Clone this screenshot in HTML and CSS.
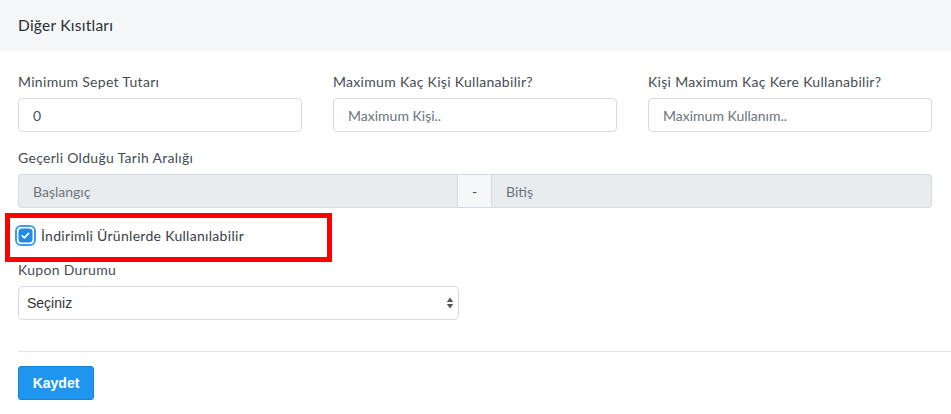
FILE: index.html
```html
<!DOCTYPE html>
<html lang="tr">
<head>
<meta charset="utf-8">
<title>Diğer Kısıtları</title>
<link rel="stylesheet" href="styles.css">
</head>
<body>
<div class="card">
  <div class="card-header">Diğer Kısıtları</div>
  <div class="card-body">
    <div class="row">
      <div class="col">
        <label class="lbl">Minimum Sepet Tutarı</label>
        <div class="input">0</div>
      </div>
      <div class="col">
        <label class="lbl">Maximum Kaç Kişi Kullanabilir?</label>
        <div class="input placeholder">Maximum Kişi..</div>
      </div>
      <div class="col">
        <label class="lbl">Kişi Maximum Kaç Kere Kullanabilir?</label>
        <div class="input placeholder">Maximum Kullanım..</div>
      </div>
    </div>

    <div class="group">
      <label class="lbl">Geçerli Olduğu Tarih Aralığı</label>
      <div class="input-group">
        <div class="input disabled left">Başlangıç</div>
        <div class="addon">-</div>
        <div class="input disabled right">Bitiş</div>
      </div>
    </div>

    <div class="highlight">
      <span class="check">
        <svg width="21" height="21" viewBox="0 0 21 21">
          <rect x="1" y="1" width="19" height="19" rx="5" fill="#ffffff" stroke="#3d9cf0" stroke-width="2"/>
          <rect x="3.5" y="3.5" width="14" height="14" rx="3.5" fill="#1f8ae8"/>
          <path d="M7.3 10.8 L9.4 12.8 L13.6 8.4" fill="none" stroke="#ffffff" stroke-width="1.8" stroke-linecap="round" stroke-linejoin="round"/>
        </svg>
      </span>
      <span class="check-label">İndirimli Ürünlerde Kullanılabilir</span>
    </div>

    <div class="group small">
      <label class="lbl">Kupon Durumu</label>
      <div class="select">
        <span>Seçiniz</span>
        <svg class="arrows" width="8" height="14" viewBox="0 0 8 14">
          <path d="M4 1.5 L7.2 6 L0.8 6 Z" fill="#555"/>
          <path d="M4 12.5 L7.2 8 L0.8 8 Z" fill="#555"/>
        </svg>
      </div>
    </div>
  </div>
  <div class="footer">
    <button class="btn">Kaydet</button>
  </div>
</div>
</body>
</html>
```
FILE: styles.css
```css
html, body {
  margin: 0;
  padding: 0;
  background: #ffffff;
}
body {
  font-family: Lato, "Noto Sans", sans-serif;
  color: #495057;
}
.card {
  width: 951px;
}
.card-header {
  height: 51px;
  background: #f5f6f8;
  padding-left: 18px;
  display: flex;
  align-items: center;
  font-size: 15.5px;
  letter-spacing: 0.25px;
  color: #2b2f33;
  padding-bottom: 1px;
  box-sizing: border-box;
}
.card-body {
  padding: 21px 19px 0 18px;
}
.row {
  display: flex;
  gap: 31px;
}
.col {
  width: 284px;
  display: flex;
  flex-direction: column;
}
.lbl {
  display: block;
  font-size: 14px;
  letter-spacing: 0.3px;
  line-height: 20px;
  color: #474c52;
  margin-bottom: 6px;
}
.input {
  height: 34px;
  box-sizing: border-box;
  border: 1px solid #d5dae3;
  border-radius: 4px;
  padding: 0 14px;
  display: flex;
  align-items: center;
  font-size: 14px;
  color: #495057;
  background: #fff;
}
.input.placeholder {
  color: #6c737b;
}
.group {
  margin-top: 16px;
}
.input-group {
  display: flex;
  height: 34px;
}
.input.disabled {
  background: #e9ecef;
  color: #6c737b;
}
.input.left {
  width: 439px;
  border-radius: 4px 0 0 4px;
  border-right: none;
}
.input.right {
  flex: 1;
  border-radius: 0 4px 4px 0;
  border-left: none;
}
.addon {
  width: 35px;
  box-sizing: border-box;
  border: 1px solid #d5dae3;
  background: #f6f7f9;
  display: flex;
  align-items: center;
  justify-content: center;
  font-size: 14px;
  color: #495057;
}
.highlight {
  margin: 5px 0 0 -13px;
  width: 327px;
  height: 49px;
  box-sizing: border-box;
  border: 5px solid #ff0000;
  display: flex;
  align-items: center;
  padding-left: 5px;
  padding-bottom: 4px;
}
.check {
  display: flex;
  width: 21px;
  height: 21px;
}
.check-label {
  margin-left: 5px;
  font-size: 14px;
  letter-spacing: 0.3px;
  color: #3b4046;
}
.group.small {
  margin-top: -2px;
}
.select {
  width: 441px;
  height: 34px;
  box-sizing: border-box;
  border: 1px solid #d5dae3;
  border-radius: 5px;
  display: flex;
  align-items: center;
  justify-content: space-between;
  padding: 0 4px 0 8px;
  font-family: "Liberation Sans", Arial, sans-serif;
  font-size: 14px;
  color: #333;
}
.footer {
  margin-top: 31px;
  margin-left: 18px;
  border-top: 1px solid #e3e6ea;
  padding-top: 14px;
}
.btn {
  width: 76px;
  height: 34px;
  background: #1e96ef;
  border: 1px solid #1783d4;
  border-radius: 3px;
  color: #ffffff;
  font-family: "Liberation Sans", Arial, sans-serif;
  font-weight: bold;
  font-size: 14px;
  padding: 0;
}
```
